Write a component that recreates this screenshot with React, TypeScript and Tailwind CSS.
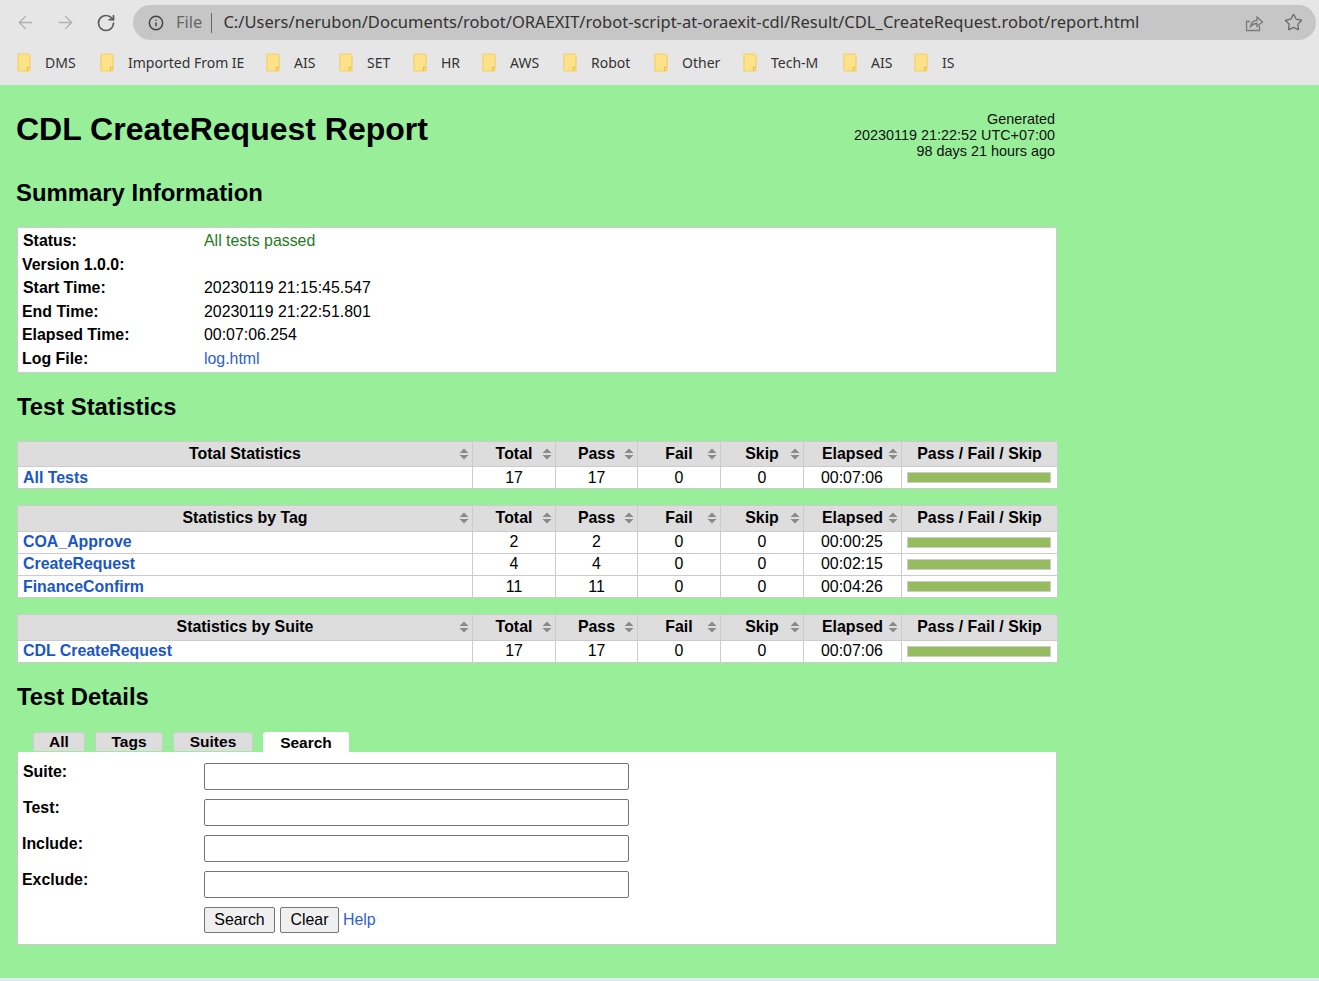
import React from 'react';
import { ArrowLeft, ArrowRight, RotateCw, Info, Star } from 'lucide-react';

const bookmarks = [
  { name: 'DMS', ml: 'ml-[17px]', w: 'w-[83px]' },
  { name: 'Imported From IE', ml: '', w: 'w-[166px]' },
  { name: 'AIS', ml: '', w: 'w-[73px]' },
  { name: 'SET', ml: '', w: 'w-[74px]' },
  { name: 'HR', ml: '', w: 'w-[69px]' },
  { name: 'AWS', ml: '', w: 'w-[81px]' },
  { name: 'Robot', ml: '', w: 'w-[91px]' },
  { name: 'Other', ml: '', w: 'w-[89px]' },
  { name: 'Tech-M', ml: '', w: 'w-[100px]' },
  { name: 'AIS', ml: '', w: 'w-[71px]' },
  { name: 'IS', ml: '', w: 'w-[60px]' },
];

const summary = [
  { label: 'Status:', value: 'All tests passed', cls: 'text-[#1f7a1f]', pad: 'pl-[5px]' },
  { label: 'Version 1.0.0:', value: '', cls: '', pad: 'pl-[4px]' },
  { label: 'Start Time:', value: '20230119 21:15:45.547', cls: 'text-black', pad: 'pl-[5px]' },
  { label: 'End Time:', value: '20230119 21:22:51.801', cls: 'text-black', pad: 'pl-[4px]' },
  { label: 'Elapsed Time:', value: '00:07:06.254', cls: 'text-black', pad: 'pl-[4px]' },
  { label: 'Log File:', value: 'log.html', cls: 'text-[#2b5fd0]', pad: 'pl-[4px]' },
];

const searchFields = [
  { label: 'Suite:', pad: 'pl-[5px]' },
  { label: 'Test:', pad: 'pl-[5px]' },
  { label: 'Include:', pad: 'pl-[4px]' },
  { label: 'Exclude:', pad: 'pl-[4px]' },
];

const statTables = [
  {
    title: 'Total Statistics',
    head: 'h-[25px]',
    rows: [{ name: 'All Tests', total: 17, pass: 17, elapsed: '00:07:06', row: 'h-[22px]' }],
  },
  {
    title: 'Statistics by Tag',
    head: 'h-[26px]',
    rows: [
      { name: 'COA_Approve', total: 2, pass: 2, elapsed: '00:00:25', row: 'h-[22px] [&>td:not(:last-child)]:pb-[2px]' },
      { name: 'CreateRequest', total: 4, pass: 4, elapsed: '00:02:15', row: 'h-[22px] [&>td:not(:last-child)]:pb-[2px]' },
      { name: 'FinanceConfirm', total: 11, pass: 11, elapsed: '00:04:26', row: 'h-[22px]' },
    ],
  },
  {
    title: 'Statistics by Suite',
    head: 'h-[26px]',
    rows: [{ name: 'CDL CreateRequest', total: 17, pass: 17, elapsed: '00:07:06', row: 'h-[22px] [&>td:not(:last-child)]:pb-[2px]' }],
  },
];

function Folder() {
  return (
    <svg width="14" height="19" viewBox="0 0 14 19" className="shrink-0">
      <path d="M1 2 Q1 1 2 1 H11 Q13 1 13 3 V17 Q13 18 12 18 H2 Q1 18 1 17 Z" fill="#fde28a" stroke="#f5cf63" strokeWidth="1.2" />
      <path d="M10.5 18 V14.5 H13" fill="none" stroke="#e9bd4c" strokeWidth="1.2" />
    </svg>
  );
}

function SortIcon() {
  return (
    <svg width="10" height="12" viewBox="0 0 10 12" className="shrink-0">
      <path d="M5 0.5 L9.5 5 H0.5 Z M0.5 7 H9.5 L5 11.5 Z" fill="#8a8a8a" />
    </svg>
  );
}

function ShareIcon() {
  return (
    <svg width="20" height="20" viewBox="0 0 20 20" fill="none" stroke="#7a7a7a" strokeWidth="1.3">
      <path d="M6 8.5 H2.5 V17.5 H15.5 V13" />
      <path d="M6.5 13.5 C7 9.5 10 7.5 13 7.5 V4 L18.5 9 L13 13.5 V10.5 C10.5 10.5 8 11.5 6.5 13.5 Z" />
    </svg>
  );
}

function HeadCell({ label }: { label: string }) {
  return (
    <th className="border-r border-[#ccc] p-0 font-bold text-center align-top">
      <div className="relative flex items-center justify-center h-[24px]">
        <span>{label}</span>
        <span className="absolute right-[3px] top-[6px]"><SortIcon /></span>
      </div>
    </th>
  );
}

function StatTable({ title, head, rows }: { title: string; head: string; rows: { name: string; total: number; pass: number; elapsed: string; row: string }[] }) {
  return (
    <table className="table-fixed border-collapse w-[1040px] ml-[17px] bg-white border border-[#ccc] text-[15.9px] leading-[18px]">
      <colgroup>
        <col className="w-[455px]" />
        <col className="w-[83px]" />
        <col className="w-[82px]" />
        <col className="w-[83px]" />
        <col className="w-[83px]" />
        <col className="w-[98px]" />
        <col className="w-[156px]" />
      </colgroup>
      <thead>
        <tr className={`bg-[#ddd] border-b border-[#ccc] ${head}`}>
          <HeadCell label={title} />
          <HeadCell label="Total" />
          <HeadCell label="Pass" />
          <HeadCell label="Fail" />
          <HeadCell label="Skip" />
          <th className="border-r border-[#ccc] p-0 font-bold text-left align-top">
            <div className="flex items-center h-[24px] pl-[18px] gap-[5px]">
              <span>Elapsed</span>
              <SortIcon />
            </div>
          </th>
          <th className="p-0 font-bold text-center align-top">
            <div className="flex items-center justify-center h-[24px]">Pass / Fail / Skip</div>
          </th>
        </tr>
      </thead>
      <tbody>
        {rows.map((row) => (
          <tr key={row.name} className={`border-b border-[#ccc] ${row.row}`}>
            <td className="border-r border-[#ccc] p-0 pl-[5px] font-bold text-[#1a56c4]">{row.name}</td>
            <td className="border-r border-[#ccc] p-0 text-center">{row.total}</td>
            <td className="border-r border-[#ccc] p-0 text-center">{row.pass}</td>
            <td className="border-r border-[#ccc] p-0 text-center">0</td>
            <td className="border-r border-[#ccc] p-0 text-center">0</td>
            <td className="border-r border-[#ccc] p-0 pl-[17px]">{row.elapsed}</td>
            <td className="p-0 pl-[5px] pr-[6px]">
              <div className="h-[11px] bg-[#97bb5f] border border-[#ccc]"></div>
            </td>
          </tr>
        ))}
      </tbody>
    </table>
  );
}

export default function App() {
  return (
    <div className="w-[1319px] h-[981px] overflow-hidden flex flex-col bg-[#99ee99] text-black font-['Liberation_Sans',Arial,sans-serif]">
      {/* Browser chrome */}
      <div className="h-[85px] shrink-0 bg-[#e6e6e6] font-['Noto_Sans',sans-serif]">
        <div className="h-[45px] flex items-center">
          <ArrowLeft size={21} strokeWidth={1.6} className="ml-[15px] text-[#b0b0b0]" />
          <ArrowRight size={21} strokeWidth={1.6} className="ml-[19px] text-[#b0b0b0]" />
          <RotateCw size={20} strokeWidth={2} className="ml-[20px] text-[#5a5a5a]" />
          <div className="ml-[17px] w-[1183px] h-[35px] rounded-full bg-[#c6c6c6] flex items-center">
            <Info size={16} strokeWidth={2.2} className="ml-[15px] text-[#444]" />
            <span className="ml-[12px] text-[16.5px] text-[#666]">File</span>
            <span className="ml-[9px] w-px h-[20px] bg-[#666]"></span>
            <span className="ml-[11px] text-[16.5px] tracking-[0.02px] text-[#333] whitespace-nowrap">C:/Users/nerubon/Documents/robot/ORAEXIT/robot-script-at-oraexit-cdl/Result/CDL_CreateRequest.robot/report.html</span>
            <span className="ml-auto"><ShareIcon /></span>
            <Star size={19} strokeWidth={1.6} className="ml-[20px] mr-[13px] text-[#666]" />
          </div>
        </div>
        <div className="h-[40px] flex items-center pb-[5px]">
          {bookmarks.map((b, i) => (
            <div key={i} className={`flex items-center shrink-0 ${b.ml} ${b.w}`}>
              <Folder />
              <span className="ml-[14px] text-[14px] text-[#333] whitespace-nowrap">{b.name}</span>
            </div>
          ))}
        </div>
      </div>

      {/* Report */}
      <div className="flex-1 relative">
        <div className="flex justify-between w-[1055px] pl-[16px] pt-[26px]">
          <h1 className="text-[32px] leading-[37px] font-bold">CDL CreateRequest Report</h1>
          <div className="text-right text-[14.4px] leading-[16px] text-[#111]">
            <div>Generated</div>
            <div>20230119 21:22:52 UTC+07:00</div>
            <div>98 days 21 hours ago</div>
          </div>
        </div>

        <h2 className="ml-[16px] mt-[20px] text-[23.9px] leading-[28px] font-bold">Summary Information</h2>

        <div className="ml-[17px] mt-[20px] w-[1040px] h-[146px] bg-white border border-[#ccc] pt-[1px] text-[15.9px] leading-[23.6px]">
          {summary.map((s) => (
            <div key={s.label} className="flex">
              <div className={`w-[186px] font-bold shrink-0 ${s.pad}`}>{s.label}</div>
              <div className={s.cls}>{s.value}</div>
            </div>
          ))}
        </div>

        <h2 className="ml-[17px] mt-[20px] text-[23.8px] leading-[28px] font-bold">Test Statistics</h2>

        <div className="mt-[20px] flex flex-col gap-[16px]">
          {statTables.map((t) => (
            <StatTable key={t.title} title={t.title} head={t.head} rows={t.rows} />
          ))}
        </div>

        <h2 className="ml-[17px] mt-[20px] text-[23.8px] leading-[28px] font-bold">Test Details</h2>

        {/* Tabs */}
        <div className="ml-[33px] mt-[21px] flex items-end gap-[10px] text-[15.5px] font-bold h-[20px]">
          <div className="w-[52px] h-[19px] mb-[1px] flex items-center justify-center bg-[#ddd] border border-[#ccc] border-b-0 rounded-t-[3px]">All</div>
          <div className="w-[68px] h-[19px] mb-[1px] flex items-center justify-center bg-[#ddd] border border-[#ccc] border-b-0 rounded-t-[3px]">Tags</div>
          <div className="w-[80px] h-[19px] mb-[1px] flex items-center justify-center bg-[#ddd] border border-[#ccc] border-b-0 rounded-t-[3px]">Suites</div>
          <div className="w-[86px] h-[20px] pt-[1px] flex items-center justify-center bg-white rounded-t-[3px]">Search</div>
        </div>

        {/* Search form */}
        <div className="ml-[17px] w-[1040px] h-[193px] bg-white border-b border-x border-[#ccc] pt-[11px] text-[15.9px]">
          {searchFields.map((f) => (
            <div key={f.label} className="flex h-[36px]">
              <div className={`w-[186px] font-bold leading-[18px] shrink-0 ${f.pad}`}>{f.label}</div>
              <div className="w-[425px] h-[27px] border border-[#767676] rounded-[2px] bg-white"></div>
            </div>
          ))}
          <div className="flex items-center h-[26px] ml-[186px] gap-[5px]">
            <button className="h-[26px] w-[71px] border border-[#767676] rounded-[2px] bg-[#efefef]">Search</button>
            <button className="h-[26px] w-[59px] border border-[#767676] rounded-[2px] bg-[#efefef]">Clear</button>
            <span className="text-[#2f5fd8] -ml-px">Help</span>
          </div>
        </div>

        <div className="absolute bottom-0 left-0 right-0 h-[3px] bg-[#dfeaf3]"></div>
      </div>
    </div>
  );
}
